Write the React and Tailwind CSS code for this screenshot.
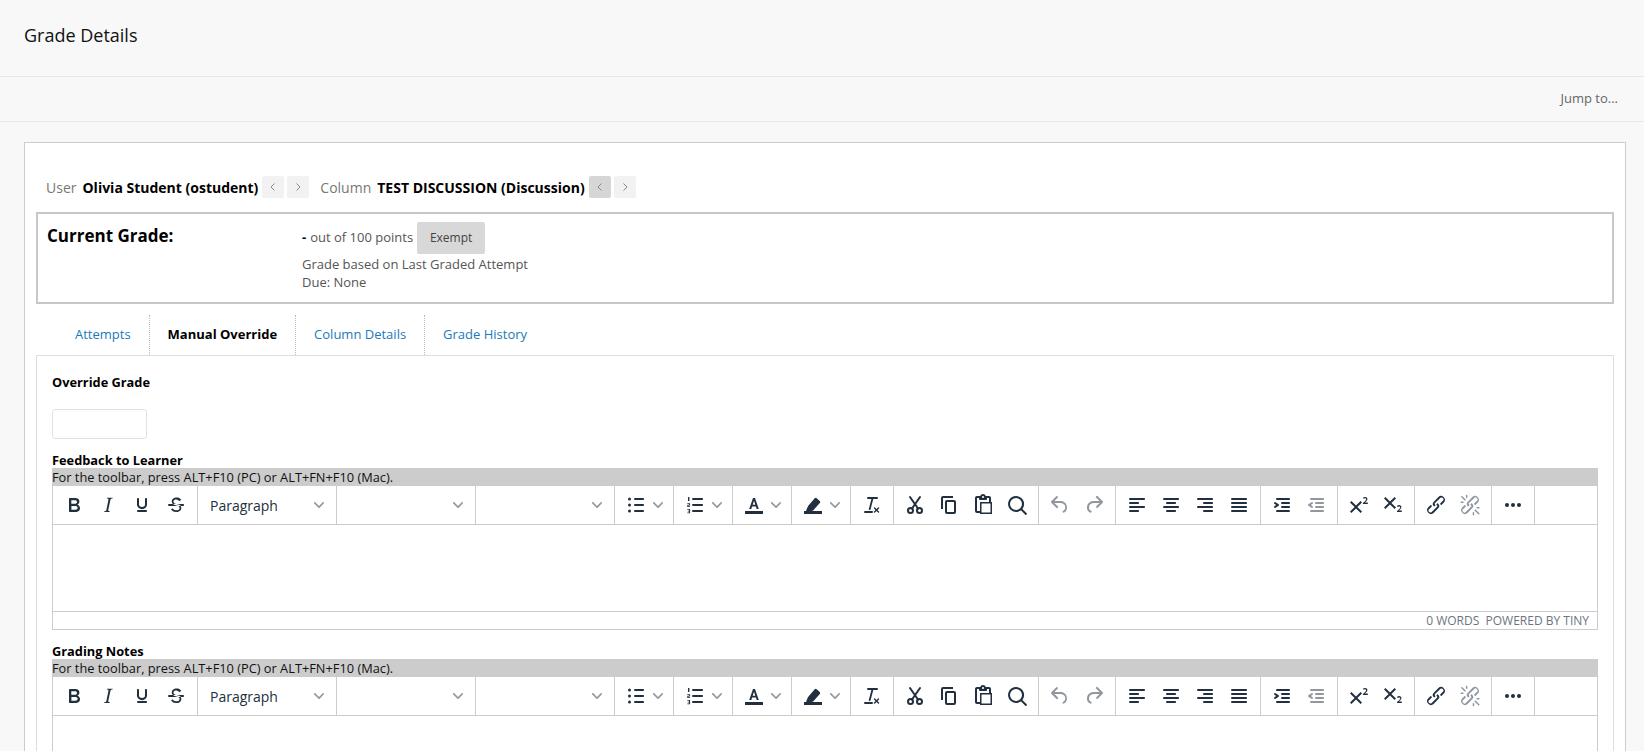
const P = {
  bold: "M7.8 19c-.3 0-.5 0-.6-.2l-.2-.5V5.7c0-.2 0-.4.2-.5l.6-.2h5c1.5 0 2.7.3 3.5 1 .7.6 1.1 1.4 1.1 2.5a3 3 0 01-.6 1.9c-.4.6-1 1-1.6 1.2.4.1.9.3 1.3.6s.8.7 1 1.2c.4.4.5 1 .5 1.6 0 1.3-.4 2.3-1.3 3-.8.7-2.1 1-3.8 1H7.8zm5-8.3c.6 0 1.2-.1 1.6-.5.4-.3.6-.7.6-1.3 0-1.1-.8-1.7-2.3-1.7H9.3v3.5h3.4zm.5 6c.7 0 1.3-.1 1.7-.4.4-.4.6-.9.6-1.5s-.2-1-.7-1.4c-.4-.3-1-.4-2-.4H9.4v3.8h4z",
  italic: "M16.7 4.7l-.1.9h-.3c-.6 0-1 0-1.4.3-.3.3-.4.6-.5 1.1l-2.1 9.8v.6c0 .5.4.8 1.4.8h.2l-.2.8H8l.2-.8h.2c1.1 0 1.8-.5 2-1.5l2-9.8.1-.5c0-.6-.4-.8-1.4-.8h-.3l.2-.9h5.8z",
  underline: "M16 5c.6 0 1 .4 1 1v5.5a4 4 0 01-.4 1.8l-1 1.4a5.3 5.3 0 01-5.5 1 5 5 0 01-1.6-1c-.5-.4-.8-.9-1.1-1.4a4 4 0 01-.4-1.8V6c0-.6.4-1 1-1s1 .4 1 1v5.5c0 .3 0 .6.2 1l.6.7a3.3 3.3 0 002.2.8 3.4 3.4 0 002.2-.8c.3-.2.4-.5.6-.8l.2-.9V6c0-.6.4-1 1-1zM8 17h8c.6 0 1 .4 1 1s-.4 1-1 1H8a1 1 0 010-2z",
  strike: "M15.6 8.5c-.5-.7-1-1.1-1.3-1.3-.6-.4-1.3-.6-2-.6-2.7 0-2.8 1.7-2.8 2.1 0 1.6 1.8 2 3.2 2.3 4.4.9 4.6 2.8 4.6 3.9 0 1.4-.7 4.1-5 4.1A6.2 6.2 0 017 16.4l1.5-1.1c.4.6 1.6 2 3.7 2 1.6 0 2.5-.4 3-1 .3-.4.4-.9.4-1.5 0-1.6-1.8-2-3.2-2.3-4.4-.9-4.6-2.8-4.6-3.9 0-1.4.7-4.1 5-4.1 1.4 0 2.7.5 3.7 1.4.3.3.6.6.8 1l-1.7.9zM5 11h14c.6 0 1 .4 1 1s-.4 1-1 1H5a1 1 0 010-2z",
  bullist: "M11 5h8c.6 0 1 .4 1 1s-.4 1-1 1h-8a1 1 0 010-2zm0 6h8c.6 0 1 .4 1 1s-.4 1-1 1h-8a1 1 0 010-2zm0 6h8c.6 0 1 .4 1 1s-.4 1-1 1h-8a1 1 0 010-2z",
  numlist: "M10 5h9c.6 0 1 .4 1 1s-.4 1-1 1h-9a1 1 0 010-2zm0 6h9c.6 0 1 .4 1 1s-.4 1-1 1h-9a1 1 0 010-2zm0 6h9c.6 0 1 .4 1 1s-.4 1-1 1h-9a1 1 0 010-2z",
  marker: "M5.5 16.6l1.6-3.7 6.6-7.6a1.4 1.4 0 012 0l3 2.6a1.4 1.4 0 01.1 2l-6.6 7.5-3.3 1-1.3 1H4.800z",
  clear: "M13.2 6a1 1 0 010 .2l-2.6 10a1 1 0 01-1 .8h-.2a.8.8 0 01-.6-1l2.6-10H8a1 1 0 110-2h9a1 1 0 010 2h-3.8zM5 18h7a1 1 0 010 2H5a1 1 0 010-2zm13 1.500L16.500 18 15 19.500a.7.7 0 01-1-1l1.500-1.500-1.500-1.500a.7.7 0 011-1l1.500 1.500 1.500-1.500a.7.7 0 011 1L17.500 17l1.500 1.500a.7.7 0 01-1 1z",
  copy: "M16 3H6a2 2 0 00-2 2v11h2V5h10V3zm1 4a2 2 0 012 2v10a2 2 0 01-2 2h-7a2 2 0 01-2-2V9c0-1.200.9-2 2-2h7zm0 12V9h-7v10h7z",
  paste: "M18 9V5h-2v1c0 .6-.4 1-1 1H9a1 1 0 01-1-1V5H6v13h3V9h9zM9 20H6a2 2 0 01-2-2V5c0-1.100.9-2 2-2h3.200A3 3 0 0112 1a3 3 0 012.800 2H18a2 2 0 012 2v4h1v12H9v-1zm1.500-9.500v9h9v-9h-9zM12 3a1 1 0 00-1 1c0 .5.4 1 1 1s1-.5 1-1-.4-1-1-1z",
  search: "M16 17.300a8 8 0 111.400-1.400l4.300 4.400a1 1 0 01-1.400 1.400l-4.400-4.400zm-5-.3a6 6 0 100-12 6 6 0 000 12z",
  undo: "M6.400 8H12c3.700 0 6.200 2 6.800 5.100.6 2.700-.4 5.600-2.900 6.500a1 1 0 11-.6-1.900c1.500-.6 2.200-2.500 1.900-4.200-.4-2.100-2-3.500-5.200-3.500H6.400l3.300 3.300a1 1 0 11-1.400 1.400l-5-5a1 1 0 010-1.400l5-5a1 1 0 011.400 1.400L6.400 8z",
  redo: "M17.600 10H12c-2.800 0-4.400 1.400-4.900 3.500-.4 2 .3 3.500 1.800 4.200a1 1 0 11-.8 1.800c-2.500-1-3.600-3.700-3-6.500C5.700 10 8.200 8 12 8h5.600l-3.300-3.300a1 1 0 111.400-1.400l5 5a1 1 0 010 1.400l-5 5a1 1 0 01-1.400-1.400l3.300-3.300z",
  alignLeft: "M5 5h14c.6 0 1 .4 1 1s-.4 1-1 1H5a1 1 0 110-2zm0 4h8c.6 0 1 .4 1 1s-.4 1-1 1H5a1 1 0 110-2zm0 8h8c.6 0 1 .4 1 1s-.4 1-1 1H5a1 1 0 010-2zm0-4h14c.6 0 1 .4 1 1s-.4 1-1 1H5a1 1 0 010-2z",
  alignCenter: "M5 5h14c.6 0 1 .4 1 1s-.4 1-1 1H5a1 1 0 110-2zm3 4h8c.6 0 1 .4 1 1s-.4 1-1 1H8a1 1 0 110-2zm0 8h8c.6 0 1 .4 1 1s-.4 1-1 1H8a1 1 0 010-2zm-3-4h14c.6 0 1 .4 1 1s-.4 1-1 1H5a1 1 0 010-2z",
  alignRight: "M5 5h14c.6 0 1 .4 1 1s-.4 1-1 1H5a1 1 0 110-2zm6 4h8c.6 0 1 .4 1 1s-.4 1-1 1h-8a1 1 0 010-2zm0 8h8c.6 0 1 .4 1 1s-.4 1-1 1h-8a1 1 0 010-2zm-6-4h14c.6 0 1 .4 1 1s-.4 1-1 1H5a1 1 0 010-2z",
  justify: "M5 5h14c.6 0 1 .4 1 1s-.4 1-1 1H5a1 1 0 110-2zm0 4h14c.6 0 1 .4 1 1s-.4 1-1 1H5a1 1 0 110-2zm0 4h14c.6 0 1 .4 1 1s-.4 1-1 1H5a1 1 0 010-2zm0 4h14c.6 0 1 .4 1 1s-.4 1-1 1H5a1 1 0 010-2z",
  indent: "M7 5h12c.6 0 1 .4 1 1s-.4 1-1 1H7a1 1 0 110-2zm5 4h7c.6 0 1 .4 1 1s-.4 1-1 1h-7a1 1 0 010-2zm0 4h7c.6 0 1 .4 1 1s-.4 1-1 1h-7a1 1 0 010-2zm-5 4h12a1 1 0 010 2H7a1 1 0 010-2zm-2.600-3.800L6.200 12l-1.800-1.200a1 1 0 011.200-1.600l3 2a1 1 0 010 1.600l-3 2a1 1 0 11-1.200-1.600z",
  outdent: "M7 5h12c.6 0 1 .4 1 1s-.4 1-1 1H7a1 1 0 110-2zm5 4h7c.6 0 1 .4 1 1s-.4 1-1 1h-7a1 1 0 010-2zm0 4h7c.6 0 1 .4 1 1s-.4 1-1 1h-7a1 1 0 010-2zm-5 4h12a1 1 0 010 2H7a1 1 0 010-2zm1.600-3.800a1 1 0 01-1.200 1.600l-3-2a1 1 0 010-1.600l3-2a1 1 0 011.200 1.600L6.800 12l1.800 1.200z",
  sup: "M15 9.400L10.400 14l4.600 4.600-1.400 1.400L9 15.400 4.400 20 3 18.600 7.600 14 3 9.400 4.400 8 9 12.600 13.600 8 15 9.400zm5.900 1.600h-5v-1l1-.8 1.700-1.600c.3-.5.5-.9.5-1.400 0-.3-.1-.6-.4-.8a1 1 0 00-.7-.2c-.4 0-.8.2-1.300.6l-.8-1a3 3 0 012.200-.9c.7 0 1.300.2 1.700.6.4.4.6.9.6 1.500s-.2 1.100-.5 1.600a8 8 0 01-1.400 1.300l-.6.6h2.900V11h.1z",
  sub: "M10.400 10l4.600 4.600-1.400 1.400L9 11.400 4.400 16 3 14.600 7.600 10 3 5.400 4.400 4 9 8.600 13.600 4 15 5.400 10.400 10zM21 19h-5v-1l1-.8 1.700-1.600c.3-.4.5-.8.5-1.200 0-.3-.1-.6-.3-.7-.2-.2-.5-.3-.8-.3a2 2 0 00-1.300.5l-.8-1a3 3 0 012.100-.8c.7 0 1.300.2 1.700.6.4.3.6.8.6 1.400 0 .5-.2 1-.5 1.500a8 8 0 01-1.400 1.300l-.6.6h2.900V19h.2z",
  link: "M6.200 12.300a1 1 0 011.400 1.400l-2 2a2 2 0 102.600 2.800l4.800-4.800a1 1 0 000-1.400 1 1 0 111.400-1.300 2.900 2.900 0 010 4L9.600 20a3.900 3.900 0 01-5.500-5.500l2-2zm11.600-.6a1 1 0 01-1.400-1.400l2-2a2 2 0 10-2.600-2.800L11 10a1 1 0 000 1.400A1 1 0 119.600 13a2.900 2.900 0 010-4L14.400 4a3.900 3.900 0 015.500 5.500l-2 2z",
  unlink: "M6.200 12.300a1 1 0 011.400 1.400l-2.100 2a2 2 0 102.700 2.800l4.800-4.800a1 1 0 000-1.400 1 1 0 111.400-1.300 2.900 2.900 0 010 4L9.600 20a3.900 3.900 0 01-5.500-5.500l2-2zm11.600-.6a1 1 0 01-1.400-1.400l2.100-2a2 2 0 10-2.700-2.800L11 10a1 1 0 000 1.400A1 1 0 119.600 13a2.900 2.900 0 010-4L14.400 4a3.900 3.900 0 015.500 5.500l-2 2zM7.600 6.300a.8.8 0 01-1 1.100L3.300 4.200a.7.7 0 111-1l3.200 3.100zM5.100 8.600a.8.8 0 010 1.500H3a.8.8 0 010-1.500H5zm3.500-3.500c-.4 0-.7-.3-.7-.8v-2a.8.8 0 011.500 0v2c0 .5-.3.8-.8.8zm8 12.600a.8.8 0 011-1.100l3.200 3.200a.8.8 0 11-1 1l-3.200-3.100zm2.400-2.300a.8.8 0 010-1.500h2.100a.8.8 0 010 1.500h-2.200zm-3.600 3.600c.4 0 .8.3.8.7v2.100a.8.8 0 01-1.500 0v-2.100c0-.4.3-.7.7-.7z",
  chev: "M8.700 2.200c.3-.3.8-.3 1 0 .4.4.4.9 0 1.200L5.700 7.800c-.3.3-.9.3-1.200 0L.2 3.400a.8.8 0 010-1.200c.3-.3.8-.3 1.100 0L5 6l3.700-3.800z",
};

const Chevron = () => (
  <svg width="10" height="10" viewBox="0 0 10 10" className="text-[#222f3e]/50 fill-current shrink-0">
    <path d={P.chev} />
  </svg>
);

const Icon = ({ children, disabled }) => (
  <svg width="24" height="24" viewBox="0 0 24 24" className={disabled ? "text-[#222f3e]/50 fill-current" : "text-[#222f3e] fill-current"}>
    {children}
  </svg>
);

const Btn = ({ d, disabled, children }) => (
  <span className="w-[34px] h-[34px] flex items-center justify-center">
    <Icon disabled={disabled}>{d ? <path d={d} fillRule="evenodd" /> : children}</Icon>
  </span>
);

const Split = ({ children }) => (
  <span className="w-[50px] h-[34px] flex items-center">
    <span className="w-[34px] flex items-center justify-center"><Icon>{children}</Icon></span>
    <span className="w-[16px] flex items-center"><Chevron /></span>
  </span>
);

const Group = ({ children, last }) => (
  <div className={"flex items-center px-1 h-[38px] " + (last ? "" : "border-r border-[#cccccc]")}>{children}</div>
);

const Select = ({ label }) => (
  <div className="flex items-center justify-between w-[130px] h-[34px] pl-2 pr-2 text-[14px] text-[#222f3e]">
    <span>{label}</span>
    <Chevron />
  </div>
);

const Toolbar = () => (
  <div className="flex items-start h-[38px] bg-white">
    <Group>
      <Btn d={P.bold} />
      <Btn d={P.italic} />
      <Btn d={P.underline} />
      <Btn d={P.strike} />
    </Group>
    <Group><Select label="Paragraph" /></Group>
    <Group><Select label="" /></Group>
    <Group><Select label="" /></Group>
    <Group>
      <Split>
        <path d={P.bullist} />
        <circle cx="5.500" cy="6" r="1.500" />
        <circle cx="5.500" cy="12" r="1.500" />
        <circle cx="5.500" cy="18" r="1.500" />
      </Split>
    </Group>
    <Group>
      <Split>
        <path d={P.numlist} />
        <rect x="5" y="4" width="1.400" height="4" />
        <path d="M4.300 10.300h2.800v2.100H5.300v.8h1.800v.8H4.300v-2.300h1.800v-.6H4.300z" />
        <path d="M4.300 16h2.800v4.200H4.300v-.8h1.800v-.9H4.800v-.8h1.300v-.9H4.300z" />
      </Split>
    </Group>
    <Group>
      <Split>
        <path d="M3 18h18v3H3z" />
        <path fillRule="evenodd" d="M7.200 16l3.800-11h2l3.800 11h-2.100l-.8-2.500H10.100L9.300 16H7.200zm3.500-4.200h2.600L12 7.700l-1.300 4.100z" />
      </Split>
    </Group>
    <Group>
      <Split>
        <path d="M3 18h18v3H3z" />
        <path d={P.marker} />
      </Split>
    </Group>
    <Group><Btn d={P.clear} /></Group>
    <Group>
      <Btn>
        <g fill="none" stroke="currentColor" strokeWidth="2">
          <circle cx="7.500" cy="17.500" r="2.500" />
          <circle cx="16.500" cy="17.500" r="2.500" />
          <path d="M9 15.500L17 4M15 15.500L7 4" strokeLinecap="round" />
        </g>
      </Btn>
      <Btn d={P.copy} />
      <Btn d={P.paste} />
      <Btn d={P.search} />
    </Group>
    <Group>
      <Btn d={P.undo} disabled />
      <Btn d={P.redo} disabled />
    </Group>
    <Group>
      <Btn d={P.alignLeft} />
      <Btn d={P.alignCenter} />
      <Btn d={P.alignRight} />
      <Btn d={P.justify} />
    </Group>
    <Group>
      <Btn d={P.indent} />
      <Btn d={P.outdent} disabled />
    </Group>
    <Group>
      <Btn d={P.sup} />
      <Btn d={P.sub} />
    </Group>
    <Group>
      <Btn d={P.link} />
      <Btn d={P.unlink} disabled />
    </Group>
    <Group>
      <Btn>
        <circle cx="6" cy="12" r="2" />
        <circle cx="12" cy="12" r="2" />
        <circle cx="18" cy="12" r="2" />
      </Btn>
    </Group>
  </div>
);

const Editor = ({ label, status }) => (
  <section>
    <div className="text-[12.800px] leading-[16px] font-bold text-black">{label}</div>
    <div className="h-[18px] bg-[#cccccc] text-[12.800px] leading-[18px] text-[#111111]">
      For the toolbar, press ALT+F10 (PC) or ALT+FN+F10 (Mac).
    </div>
    <div className="border border-t-0 border-[#cccccc]">
      <Toolbar />
      <div className="h-[87px] border-t border-[#cccccc] bg-white" />
      {status && (
        <div className="h-[18px] border-t border-[#cccccc] flex items-center justify-end pr-2 text-[12px] text-[#6b7480] whitespace-pre">
          0 WORDS  POWERED BY TINY
        </div>
      )}
    </div>
  </section>
);

const Pager = ({ active }) => (
  <span className="flex gap-[3px] ml-[4px]">
    <span className={"w-[22px] h-[22px] rounded-[2px] flex items-center justify-center " + (active ? "bg-[#d6d6d6]" : "bg-[#f2f2f2]")}>
      <svg width="10" height="10" viewBox="0 0 10 10" fill="none" stroke="#888888" strokeWidth="1"><path d="M6.500 1.500L3 5l3.500 3.500" /></svg>
    </span>
    <span className="w-[22px] h-[22px] rounded-[2px] bg-[#f2f2f2] flex items-center justify-center">
      <svg width="10" height="10" viewBox="0 0 10 10" fill="none" stroke="#888888" strokeWidth="1"><path d="M3.500 1.500L7 5 3.500 8.500" /></svg>
    </span>
  </span>
);

const Tab = ({ children, active, last }) => (
  <div className={"h-[40px] px-[18px] flex items-center text-[13px] " + (last ? "" : "border-r border-dotted border-[#bbbbbb] ") + (active ? "font-bold text-black bg-white" : "text-[#1c7ab8]")}>
    {children}
  </div>
);

export default function App() {
  return (
    <div className="h-screen overflow-hidden bg-[#f8f8f8] font-['Open_Sans',sans-serif] text-[#333333]">
      <header className="h-[77px] border-b border-[#e8e8e8] pl-6 flex items-center pb-[6px]">
        <h1 className="text-[18px] text-[#111111]">Grade Details</h1>
      </header>
      <div className="h-[45px] border-b border-[#e8e8e8] flex items-center justify-end pr-[26px] text-[13px] text-[#666666]">
        Jump to...
      </div>
      <main className="ml-6 mr-[18px] mt-[20px] bg-white border border-[#cccccc] px-[11px] pt-[33px]">
        <div className="flex items-center h-[22px] pl-[10px] text-[14px]">
          <span className="text-[#777777]">User</span>
          <span className="ml-[6px] font-bold text-black">Olivia Student (ostudent)</span>
          <Pager />
          <span className="ml-[11px] text-[#777777]">Column</span>
          <span className="ml-[6px] font-bold text-black">TEST DISCUSSION (Discussion)</span>
          <Pager active />
        </div>
        <div className="mt-[14px] h-[92px] border-2 border-[#c8c8c8] flex pl-[9px]">
          <div className="w-[255px] pt-[9px] text-[17px] font-bold text-black">Current Grade:</div>
          <div className="pt-[8px] text-[13px] text-[#555555]">
            <div className="flex items-center h-[32px]">
              <span className="font-bold text-black mr-[4px]">-</span>
              <span>out of 100 points</span>
              <span className="ml-[4px] w-[68px] h-[32px] rounded-[2px] bg-[#d8d8d8] flex items-center justify-center text-[12px] text-[#444444]">Exempt</span>
            </div>
            <div className="mt-[1px] leading-[18px]">Grade based on Last Graded Attempt</div>
            <div className="leading-[18px]">Due: None</div>
          </div>
        </div>
        <div className="flex mt-[11px] pl-[21px]">
          <Tab>Attempts</Tab>
          <Tab active>Manual Override</Tab>
          <Tab>Column Details</Tab>
          <Tab last>Grade History</Tab>
        </div>
        <div className="border border-[#dddddd] px-[15px] pt-[17px] pb-[40px]">
          <div className="text-[12.800px] leading-[18px] font-bold text-black">Override Grade</div>
          <div className="mt-[18px] w-[95px] h-[30px] rounded-[3px] border border-[#e2e2e2] bg-white" />
          <div className="mt-[13px] flex flex-col gap-[13px]">
            <Editor label="Feedback to Learner" status />
            <Editor label="Grading Notes" />
          </div>
        </div>
      </main>
    </div>
  );
}
